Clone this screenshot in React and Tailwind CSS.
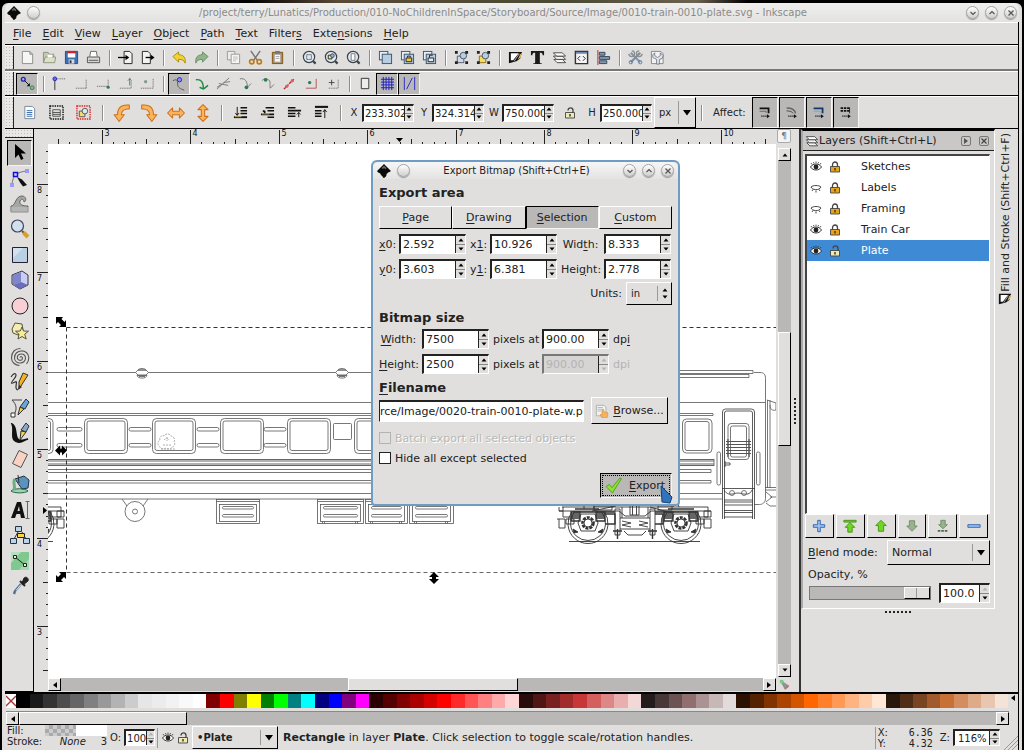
import React from "react";

const up = "border border-t-white border-l-white border-r-black border-b-black bg-[#e0dfde]";
const down = "border border-t-black border-l-black border-r-[#f4f4f4] border-b-[#f4f4f4] bg-[#b9b8b7]";

function Ic({ s = "size-4", vb = "0 0 16 16", children }) {
  return (
    <svg viewBox={vb} className={"block shrink-0 " + s} fill="none" aria-hidden="true">
      {children}
    </svg>
  );
}

/* ---------- command bar icons ---------- */
const lens = (
  <>
    <circle cx="7.5" cy="7.5" r="6" fill="#dfe8f2" stroke="#3b4248" strokeWidth="1.3" />
    <path d="M12 12l2.5 2.5" stroke="#3b4248" strokeWidth="2.4" />
  </>
);
const sheets = (
  <>
    <rect x="1.5" y="1.5" width="9" height="9" fill="#e8eef4" stroke="#39536b" />
    <rect x="4.5" y="4.5" width="10" height="10" fill="#b8cde2" stroke="#39536b" />
  </>
);
const corners = (
  <path d="M1 1h3v3H1zM12 1h3v3h-3zM1 12h3v3H1zM12 12h3v3h-3z" fill="#222" />
);
const layersIcon = (
  <>
    <path d="M2 10l3.500 3.500h9L11 10z" fill="#f6f6f6" stroke="#333" strokeWidth=".9" />
    <path d="M1.500 6.500L5 10h9.500L11 6.500z" fill="#f6f6f6" stroke="#333" strokeWidth=".9" />
    <path d="M1.500 3L5 6.500h9.500L11 3z" fill="#fff" stroke="#333" strokeWidth=".9" />
  </>
);
const fillIcon = (
  <>
    <path d="M1 2h14l-2 7-4 3-8 2z" fill="#111" />
    <path d="M3 3.500h8.500L5.500 11H3z" fill="#fff" />
    <path d="M13 4.500l2-1.500-1.500 5-3 2z" fill="#e9b85a" />
    <path d="M12 4L6.500 12" stroke="#ddd" strokeWidth=".8" />
  </>
);
const command = [
  ["New", <path d="M2.5 1.5h8l3 3v10h-11zM10.5 1.5v3h3" fill="#f6f6f4" stroke="#8b8b88" />],
  ["Open", <><path d="M1.5 13.5v-11h5l1 2h5v3" fill="#c3c8b2" stroke="#8d9380" /><path d="M1.5 13.5l2-6h11l-1 6z" fill="#dbe3c4" stroke="#8d9380" /><path d="M6 5h5v3H6z" fill="#fff" /></>],
  ["Save", <><path d="M1.5 1.5h13v13h-13z" fill="#3d6fb4" stroke="#2a4b7c" /><path d="M4 2h8v6H4z" fill="#fff" /><path d="M3 1h10v2.5H3z" fill="#d8202a" /><path d="M5 10h6v4.5H5z" fill="#d7dbe0" /><path d="M6 11h2v3H6z" fill="#333" /></>],
  ["Print", <><path d="M4 7l1-5.500h6L12 7" fill="#fff" stroke="#666" /><path d="M1.500 7.500h13v6h-13z" fill="#d8d8d6" stroke="#555" /><path d="M3 11h10" stroke="#555" /></>],
  null,
  ["Import", <><path d="M6.500 1.500h6l2.500 2.500v10.500H6.500z" fill="#f2f2f0" stroke="#222" /><path d="M0 8h9" stroke="#000" strokeWidth="1.400" /><path d="M8 5l4 3-4 3z" fill="#000" /></>],
  ["Export", <><path d="M2.500 1.500h6L11 4v10.500H2.500z" fill="#f2f2f0" stroke="#222" /><path d="M6 8h6" stroke="#000" strokeWidth="1.400" /><path d="M11.500 5l4 3-4 3z" fill="#000" /></>],
  null,
  ["Undo", <path d="M1 7l6-5v3c5 0 8 3 7 9-1-3-3-4-7-4v3z" fill="#f2d22c" stroke="#b08d0c" />],
  ["Redo", <path d="M15 7L9 2v3C4 5 1 8 2 14c1-3 3-4 7-4v3z" fill="#8fb489" stroke="#6a8f66" />],
  null,
  ["Copy", <><path d="M1.500 1.500h8v9h-8z" fill="#ededeb" stroke="#999" /><path d="M5.500 4.500h9v10h-9z" fill="#f4f4f2" stroke="#999" /><path d="M7.500 7.500h5M7.500 9.500h5M7.500 11.500h3" stroke="#bbb" /></>],
  ["Cut", <><path d="M3 1l7 10M13 1L6 11" stroke="#777" strokeWidth="1.600" /><circle cx="4" cy="12.500" r="2.300" stroke="#c07a1a" strokeWidth="1.800" /><circle cx="12" cy="12.500" r="2.300" stroke="#c07a1a" strokeWidth="1.800" /></>],
  ["Paste", <><path d="M2.500 2.500h11v12h-11z" fill="#c98a2c" stroke="#7d5114" /><path d="M4.500 4.500h7v8.500h-7z" fill="#f7f7f5" stroke="#999" /><path d="M5.500 1h5v3h-5z" fill="#777" /><path d="M6 7h4M6 9h4" stroke="#aaa" /></>],
  null,
  ["Zoom selection", <>{lens}<path d="M5 5h5v5H5z" stroke="#111" strokeDasharray="1 1" /></>],
  ["Zoom drawing", <>{lens}<path d="M4.500 5.500h4v4h-4z" fill="#f5e27a" stroke="#222" /><circle cx="9" cy="6" r="2" fill="#8fb3d6" stroke="#222" strokeWidth=".7" /></>],
  ["Zoom page", <>{lens}<path d="M5.500 4h4v7h-4z" fill="#fff" stroke="#777" /></>],
  null,
  ["Duplicate", sheets],
  ["Clone", <>{sheets}<path d="M6.500 8.500h6v4h-6z" fill="#f0c93c" stroke="#222" /><path d="M8 8V6.500h3V8" stroke="#222" /></>],
  ["Unlink clone", <>{sheets}<path d="M6.500 8.500h6v4h-6z" fill="#ecebe0" stroke="#222" /><path d="M8 8V5.500h3V6" stroke="#222" /></>],
  null,
  ["Group", <><path d="M3.500 6.500h7v7h-7z" fill="#cfdbe6" stroke="#556" /><circle cx="10" cy="6" r="3.500" fill="#b8cde2" stroke="#456" />{corners}</>],
  ["Ungroup", <><path d="M3.500 6.500h7v7h-7z" fill="#f5dc6a" stroke="#8a6d10" /><circle cx="10" cy="6" r="3.500" fill="#b8cde2" stroke="#456" />{corners}</>],
  null,
  ["Fill and Stroke", fillIcon],
  ["Text and Font", <path d="M1 1h14v4.500h-1.500c0-2-1-2.500-3-2.500v10c0 1 .500 1.200 2 1.200V15h-9v-.8c1.500 0 2-.2 2-1.200V3c-2 0-3 .5-3 2.500H1z" fill="#1a1a1a" />],
  ["Layers", layersIcon],
  ["XML Editor", <><path d="M1.500 1.500h13v13h-13z" fill="#f4f4f4" stroke="#333" strokeWidth="1.500" /><path d="M2 3h12" stroke="#6b89a8" strokeWidth="2" /><path d="M6.500 6.500L4 9l2.500 2.500M9.500 6.500L12 9l-2.500 2.500" stroke="#222" /></>],
  ["Align", <><path d="M2 0v16" stroke="#c22" /><path d="M3.500 2.500h6v3h-6zM3.500 7h11v3h-11zM3.500 11.500h8v3h-8z" fill="#7f9ab5" stroke="#345" /></>],
  null,
  ["Preferences", <><path d="M3 3l10 10" stroke="#7d99b8" strokeWidth="2.400" /><path d="M13 3L3 13" stroke="#8a8a8a" strokeWidth="2.400" /><path d="M1 4a3 3 0 103-3M15 4a3 3 0 11-3-3" stroke="#8a8f96" strokeWidth="1.400" /><circle cx="13" cy="13" r="1.800" stroke="#5c7ea6" /><circle cx="3" cy="13" r="1.800" stroke="#5c7ea6" /></>],
  ["Document Properties", <><path d="M1.500 1.500h10l2.500 2.500v10.500H1.500z" fill="#f2f2f0" stroke="#888" /><path d="M5 3v3l3 2 3-2V3l3 3-1 3-3 1v5H7v-5L3 8V5z" fill="#dfe6ee" stroke="#667" strokeWidth=".8" /></>],
];

/* ---------- snap bar icons ---------- */
const gn = "#2f7d4f";
const dots = { stroke: "#555", strokeDasharray: "1 1" };
const snap = [
  ["Snap", <><circle cx="3.500" cy="3.500" r="2" stroke="#22c" strokeWidth="1.500" /><path d="M5 5l5 5" stroke="#111" /><path d="M10.500 7.500v3.500H7z" fill="#111" /><circle cx="13" cy="12.500" r="2" fill="#8fb49b" stroke={gn} /></>, true],
  null,
  ["Snap bounding boxes", <><circle cx="3" cy="3" r="2" fill="#66f" stroke="#22c" /><path d="M3 5v10" stroke="#333" /><path d="M5 3h10" {...dots} /></>],
  ["Snap edges", <path d="M2 13h11M13 13V3" {...dots} />],
  ["Snap corners", <><path d="M1 11h12M13 11V3" {...dots} /><circle cx="13" cy="12" r="1.700" fill={gn} /></>],
  ["Snap edge midpoints", <><path d="M2 13h12M14 13V6" {...dots} /><path d="M12.500 2v8M10.500 5l2-2 2 2" stroke="#567a65" /></>],
  ["Snap box centers", <><path d="M1 13h13V3" {...dots} /><circle cx="6" cy="6" r="1.700" fill="#7d9b88" /></>],
  null,
  ["Snap nodes", <><circle cx="8" cy="4" r="2.300" fill="#8c8cf0" stroke="#22c" /><path d="M1 5c4-2 5-1 5 4 0 3 3 5 7 6" stroke="#555" /></>, true],
  ["Snap to paths", <path d="M2 4c6-1 8 3 8 10M10 14l-4-2M10 14l5-4" stroke="#1f8a44" strokeWidth="1.500" />],
  ["Snap intersections", <path d="M1 14L14 2M3 8l10 2M1 12l5-3M8 7l7-1" stroke="#777" />],
  ["Snap cusp nodes", <><path d="M2 3c6-1 8 3 8 9l4-4" stroke="#777" /><circle cx="9" cy="12" r="2" fill={gn} /></>],
  ["Snap smooth nodes", <><path d="M2 5c3-3 5-2 7-1 3 1 1 6 2 9l4-4" stroke="#777" /><circle cx="6" cy="4" r="2" fill={gn} /></>],
  ["Snap line midpoints", <><path d="M2 14L13 3" stroke="#c22" strokeWidth="1.500" strokeDasharray="3 1" /><circle cx="5" cy="11" r="1.800" fill="#c66" /><circle cx="11" cy="5" r="1.800" fill="#c66" /></>],
  ["Snap object centers", <><circle cx="6" cy="7" r="1.800" fill={gn} /><path d="M2 13h11V3" stroke="#a33" strokeWidth=".8" /></>],
  ["Snap rotation centers", <><path d="M3 7h6M6 4v6" stroke="#444" /><path d="M3 13h10V3" {...dots} /></>],
  null,
  ["Snap page border", <path d="M3.500 2.500h8v11h-8z" fill="#ececea" stroke="#333" />],
  ["Snap to grids", <path d="M1 3.500h14M1 6.500h14M1 9.500h14M1 12.500h14M3.500 1v14M6.500 1v14M9.500 1v14M12.500 1v14" stroke="#1c1cc8" />, true],
  ["Snap to guides", <path d="M2.500 1v14M13.500 1v14M11 2L5 14" stroke="#2a2ac8" />, true],
];

/* ---------- selector bar icons ---------- */
const og = { fill: "#fbb35e", stroke: "#cf6f16", strokeWidth: 0.9, strokeLinejoin: "round" };
const selA = [
  ["Select all", <><path d="M3 1.500h8l2.500 2.500v10.500H3z" fill="#fff" stroke="#789" /><path d="M5 6h6M5 8h6M5 10h6M5 12h6" stroke="#2f67b1" /></>],
  ["Select all in layers", <><path d="M1 1h14v14H1z" stroke="#111" strokeWidth="1.500" strokeDasharray="1.500 1" /><path d="M4 5h8v7H4zM4 8h8M4 10h8" fill="#ddd" stroke="#555" /></>],
  ["Deselect", <><path d="M1 1h14v14H1z" stroke="#d22" strokeWidth="1.500" strokeDasharray="1.500 1" /><path d="M3.500 6.500h6v6h-6z" fill="#f5dc6a" stroke="#555" /><circle cx="9.500" cy="6.500" r="3" fill="#dce9f5" stroke="#555" /></>],
  null,
  ["Rotate 90 CCW", <path d="M14.500 1C8 0 4 3 4 9.500H1l4.500 6 4.500-6H7.500c0-3 2-5.500 7-5z" {...og} />],
  ["Rotate 90 CW", <path d="M1.500 1C8 0 12 3 12 9.500h3l-4.500 6-4.500-6h2.500c0-3-2-5.500-7-5z" {...og} />],
  ["Flip horizontal", <path d="M0.500 8l4.500-4.500v3h6v-3l4.500 4.500-4.500 4.500v-3H5v3z" {...og} />],
  ["Flip vertical", <path d="M8 .5l4.500 4.500h-3v6h3L8 15.500 3.500 11h3V5h-3z" {...og} />],
  null,
  ["Lower to bottom", <><path d="M8 3h7M8 6h7M8 9h7" stroke="#111" strokeWidth="1.600" /><path d="M4.500 2v9M2.500 8.500l2 2.500 2-2.500" stroke="#111" /><path d="M1 13h14" stroke="#111" strokeWidth="2" /><path d="M2 12.500h7" stroke="#d8b45a" /></>],
  ["Lower", <><path d="M6 3h9M8 6h7M8 13h7" stroke="#111" strokeWidth="1.600" /><path d="M5 6v3M3 6.500h2M1 10h14" stroke="#111" strokeWidth="1.800" /><path d="M2 9.500h8" stroke="#d8b45a" /></>],
  ["Raise", <><path d="M1 3h8M1 9h8M1 12h8M1 6h14" stroke="#111" strokeWidth="1.700" /><path d="M12.500 13V8M10.500 10l2-2 2 2" stroke="#111" /></>],
  ["Raise to top", <><path d="M1 2h14" stroke="#111" strokeWidth="2.200" /><path d="M1 6h7M1 9h7M1 12h7" stroke="#111" strokeWidth="1.600" /><path d="M11.500 14V5M9.500 7.500l2-2.500 2 2.500" stroke="#111" /></>],
];
const affect = [
  ["Scale stroke width", <><path d="M2 3h11v6" stroke="#111" strokeWidth="2.200" /><path d="M2 6.500h8v2" stroke="#555" /></>],
  ["Scale rounded corners", <><path d="M2 2.500c6 0 10 1 11 6.500" stroke="#666" strokeWidth="1.800" /><path d="M2 6c4 0 7 1 8 3" stroke="#333" /></>],
  ["Move gradients", <><path d="M2 3h11v6" stroke="#123a6b" strokeWidth="2.200" /><path d="M2 6.500h8v2" stroke="#7aa0cc" /></>],
  ["Move patterns", <><path d="M2 2.500h12M2 6h12" stroke="#111" strokeWidth="2.200" strokeDasharray="3 1" /><path d="M13 2v7" stroke="#111" /></>],
];

/* ---------- toolbox icons ---------- */
const tools = [
  ["Selector", <path d="M5 1v14l3.500-3.500L11 17l2.500-1.200L11 10.500h5z" fill="#000" />, true],
  ["Node tool", <><path d="M2 16C3 8 6 4 17 3" stroke="#777" /><path d="M15 1h4v4h-4zM0 15h4v4H0z" fill="#99f" /><path d="M3.500 4.500h4v4h-4z" fill="#ccf" stroke="#11d" strokeWidth="1.500" /><path d="M7 9l5 2.500 5 5.500-4 1.500-3-4z" fill="#111" /></>],
  ["Tweak", <><path d="M1 12c5 0 4-10 11-10 4 0 5 5 2 6 0-3-3-4-4-1-1 4 3 5 8 5v6H1z" fill="#a5a6a6" stroke="#666" /><path d="M1 14h18M1 16h18M1 18h18" stroke="#c5c5c5" /></>],
  ["Zoom", <><circle cx="7.500" cy="7" r="6" fill="#cfe0f0" stroke="#445" strokeWidth="1.200" /><path d="M12 12l2 2" stroke="#555" strokeWidth="2" /><path d="M13.500 13.500l4.500 4.500" stroke="#d7a126" strokeWidth="4" /></>],
  ["Rectangle", <><path d="M2.500 2.500h15v15h-15z" fill="#b9d0e4" stroke="#223" /><path d="M3 3h10L3 13z" fill="#d3e2ef" /></>],
  ["3D box", <><path d="M2 5l10-4 6 4v10l-8 4-8-5z" fill="#c9cdf2" stroke="#334" /><path d="M11 2v10l-8 3V5z" fill="#8084cc" /><path d="M11 12l7 3-8 4-7-4z" fill="#6a6eb8" /></>],
  ["Ellipse", <circle cx="10" cy="10" r="8" fill="#f8cfd4" stroke="#222" />],
  ["Star", <><path d="M2 8l3-6 7 1 1 6-5 5-5-2z" fill="#f5eeb0" stroke="#554" /><path d="M12 6l1.500 4 5 .2-3.800 3 1.500 4.800L12 15.500 8 18l1-4.800-3.500-3 4.700-.2z" fill="#f8ee90" stroke="#554" /></>],
  ["Spiral", <path d="M10 10.500c.3-1.600 2.800-1 2.500 1-.3 2.600-5 2.600-5.200-1-.2-4.700 8-4.900 8.200.5.200 6.500-10.800 6.900-11 0C4.300 1.800 18.300 1.500 18.800 10.500c0 3-1 5-2.300 6.300M1.500 11c0 4 3.500 7.500 8 7.500M1.500 11C1.500 5 5 1.500 10.500 1.500" stroke="#555" strokeWidth="1.100" />],
  ["Pencil", <><path d="M1 5c4-6 7-3 3 2s-3 5 1 3-2 7 3 8" stroke="#333" strokeWidth="1.200" /><path d="M9 17L18 3l-5-2-4 9z" fill="#f6b21e" stroke="#333" /><path d="M8 18l1-5 3 2z" fill="#333" /></>],
  ["Bezier", <><path d="M2 2h10M2 2c5 5 5 9 2 15" stroke="#444" /><path d="M1 15h4v4H1z" fill="#fff" stroke="#333" /><path d="M16 1l3 3-4 7-5-2z" fill="#6da6d6" stroke="#234" /><path d="M8 17l2-8 4 2z" fill="#f3c84a" stroke="#333" /></>],
  ["Calligraphy", <><path d="M2 1c6 3 2 14 7 16 4 1 6-1 9-1-4 1-6 4-10 3C-1 17 5 8 2 1z" fill="#111" stroke="#111" strokeWidth="1.500" /><path d="M16 0l3 3-3 6-5-2z" fill="#8ba9c4" stroke="#234" /><path d="M10 17l1-9 5 1z" fill="#f3d15a" stroke="#333" /></>],
  ["Eraser", <path d="M9 1.500l8.500 4-6.500 13-8.500-4z" fill="#f9d2c4" stroke="#555" />],
  ["Paint bucket", <><path d="M1 17c3-3 14-3 17 0-3 2.500-14 2.500-17 0z" fill="#9fd4b0" stroke="#264" /><path d="M5 5l9-3 5 4-1 8-6 1z" fill="#5a93bd" stroke="#234" /><path d="M5 5c-3 3 1 7-1 11" stroke="#6aae82" strokeWidth="3" /><path d="M8 1l1 8" stroke="#333" /></>],
  ["Text", <><path d="M1 18L7 2h4l4 16h-4l-.8-4H6.500L5 18zM7.500 11h2.300L9 6z" fill="#111" /><path d="M15.500 1.500h4M17.500 2v16M15.500 18.500h4" stroke="#444" strokeWidth=".8" /></>],
  ["Connector", <><path d="M8 7l-4 7M12 7l4 7" stroke="#333" /><path d="M5.500 1.500h6v5h-6zM.500 13.500h6v5h-6zM13.500 13.500h6v5h-6z" fill="#bcd3ea" stroke="#234" /><path d="M7.500 8.500h7v4h-7z" fill="#f7d640" stroke="#222" /></>],
  ["Gradient", <><path d="M1 1h18v18H1z" fill="#7fc98e" /><path d="M1 1h10L1 12z" fill="#b5e0bc" /><path d="M9 19h10V8z" fill="#a5dab0" /><path d="M5 6l10 8" stroke="#222" /><path d="M3.500 4.500h3v3h-3zM13.500 12.500h3v3h-3z" fill="#dff2e2" stroke="#222" /></>],
  ["Dropper", <><path d="M12 7l2-5c2-2 5 0 4 3l-5 4z" fill="#222" stroke="#222" /><path d="M10 5l5 5" stroke="#222" strokeWidth="2" /><path d="M11 8l-6 7-1 3" stroke="#56708c" strokeWidth="2.400" /><path d="M11 8.500l-5 6" stroke="#dfe8f0" /></>],
];

const Eye = ({ closed }) => (
  <Ic s="size-3" vb="0 0 12 12">
    {closed ? (
      <path d="M1 5c1 3 8 4 10 0M3 7.500L2 9M6 8.500v2M9 7.500L10 9M1 5c2-2 8-2 10 0" stroke="#333" strokeWidth=".9" />
    ) : (
      <>
        <path d="M0.500 6c2.500-4 8.500-4 11 0-2.500 4-8.500 4-11 0z" fill="#fff" stroke="#222" strokeWidth=".9" />
        <circle cx="6" cy="6" r="2.400" fill="#222" />
        <path d="M2 3.500L1 2M4 2.500L3.500 1M6 2V.5M8 2.500L8.500 1M10 3.500L11 2" stroke="#333" strokeWidth=".8" />
      </>
    )}
  </Ic>
);
const Lock = ({ open }) => (
  <Ic s="size-3" vb="0 0 12 12">
    <path d={open ? "M4 3.500C4 0 9 0 9 3.500V6" : "M3.500 6V4c0-4 5-4 5 0v2"} stroke="#444" strokeWidth="1.300" />
    <path d="M1.500 5.500h9v5.500h-9z" fill={open ? "#eceab8" : "#e6a41e"} stroke="#444" strokeWidth=".9" />
    <path d="M6 7v2.500" stroke="#4a2b00" strokeWidth="1.400" />
  </Ic>
);
const Logo = () => (
  <Ic s="size-[14px]" vb="0 0 14 14">
    <path d="M7 0l6.500 6.500c.8 1-1 1.500-2.500 2 0 1-2 1-1.500 2S8 14 7 14s-1-1.500-2.500-2.500S4 9.500 2.500 9-.3 7.500.5 6.500z" fill="#0a0a0a" />
    <path d="M7 1.500L4.500 4l1.500 1 1-1 1.500 1.200 1-1.200z" fill="#666" />
  </Ic>
);

const Arrow = ({ d, c = "#000" }) => (
  <svg viewBox="0 0 6 6" className="block size-1.5" aria-hidden="true">
    <path d={{ up: "M.5 4.500l2.500-3 2.500 3z", down: "M.5 1.500l2.500 3 2.500-3z", left: "M5 0L1 3l4 3z", right: "M1 0l4 3-4 3z" }[d]} fill={c} />
  </svg>
);
const DropArrow = () => (
  <svg viewBox="0 0 8 6" className="h-1.5 w-2" aria-hidden="true"><path d="M0 0h8L4 5.500z" /></svg>
);

function RoundBtn({ kind, label }) {
  return (
    <button aria-label={label} className="grid size-[13px] place-items-center rounded-full border border-[#a5a5a4] bg-linear-to-b from-white to-[#cfcfce] shadow-[0_1px_1px_#999]">
      <svg viewBox="0 0 8 8" className="block size-2" fill="none" stroke="#555" strokeWidth="1.200">
        {kind === "down" && <path d="M1.500 3L4 5.500 6.500 3" />}
        {kind === "up" && <path d="M1.500 5L4 2.500 6.500 5" />}
        {kind === "x" && <path d="M1.500 1.500l5 5M6.500 1.500l-5 5" />}
      </svg>
    </button>
  );
}

function ToolBtn({ label, pressed, size, children }) {
  return (
    <button
      aria-label={label}
      className={"flex shrink-0 items-center justify-center " + size + " " + (pressed ? down : "border border-transparent")}
    >
      {children}
    </button>
  );
}
const Sep = ({ w = "w-[10px]" }) => (
  <span className={"flex h-4 shrink-0 justify-center " + w}>
    <span className="w-px bg-[#8f8e8d] shadow-[1px_0_0_#fff]" />
  </span>
);
const Handle = () => (
  <span className="mr-[2px] w-[9px] shrink-0 self-stretch border-r border-r-[#222] bg-[#e9e8e7] bg-[radial-gradient(#bdbcbb_30%,transparent_35%)] bg-[size:3px_3px]" />
);

function Spin({ value, label, id, disabled, upOff, className = "w-full h-5", text = "text-[11px] pl-[2px]", size = "w-[10px]" }) {
  const ink = disabled ? "text-[#b4b3b2]" : "text-[#222]";
  const frame = disabled ? "border-t-[#777] border-l-[#777]" : "border-t-[#222] border-l-[#222]";
  return (
    <span className={"flex border-t-2 border-l-2 border-r border-b border-r-white border-b-white " + frame + " " + className}>
      <input
        id={id}
        aria-label={label}
        defaultValue={value}
        disabled={disabled}
        className={"min-w-0 flex-1 leading-none outline-none " + text + " " + ink + (disabled ? " bg-[#d6d5d4]" : " bg-white")}
      />
      <span className={"flex shrink-0 flex-col border-l border-l-[#222] " + size}>
        <button aria-label={"Increase " + label} disabled={disabled} className="grid flex-1 place-items-center border-b border-b-[#888] bg-[#e0dfde]">
          <Arrow d="up" c={disabled || upOff ? "#b4b3b2" : "#000"} />
        </button>
        <button aria-label={"Decrease " + label} disabled={disabled} className="grid flex-1 place-items-center bg-[#e0dfde]">
          <Arrow d="down" c={disabled ? "#b4b3b2" : "#000"} />
        </button>
      </span>
    </span>
  );
}

function U({ t }) {
  const [a, b, c] = t.split("_");
  return (
    <span>
      {a}
      <span className="underline underline-offset-2">{b}</span>
      {c}
    </span>
  );
}

const menus = ["_F_ile", "_E_dit", "_V_iew", "_L_ayer", "_O_bject", "_P_ath", "_T_ext", "Filter_s_", "Exte_n_sions", "_H_elp"];

const palette = (
  "000000 1a1a1a 333333 4d4d4d 666666 808080 999999 b3b3b3 cccccc e6e6e6 ececec f2f2f2 f9f9f9 ffffff " +
  "800000 ff0000 808000 ffff00 008000 00ff00 008080 00ffff 000080 0000ff 800080 ff00ff " +
  "2b0000 550000 800000 aa0000 d40000 ff0000 ff2a2a ff5555 ff8080 ffaaaa ffd5d5 " +
  "280b0b 501616 782121 a02c2c c83737 d35f5f de8787 e9afaf f4d7d7 " +
  "241c1c 483737 6c5353 916f6f ac9393 c8b7b7 e3dbdb " +
  "2b1100 552200 803300 aa4400 d45500 ff6600 ff7f2a ff9955 ffb380 ffccaa ffe6d5 " +
  "28170b 502d16 784421 a05a2c c87137 d38d5f deaa87 e9c6af f4e3d7"
).split(" ");

/* ---------- rulers ---------- */
function HRuler() {
  const t = [];
  for (let i = -4; i <= 60; i++) {
    const x = Math.round(102 + i * 11.05) + 0.5;
    const major = i % 8 === 0;
    t.push(<path key={i} d={`M${x} 15v${major ? -14 : i % 4 === 0 ? -5 : -2}`} stroke="#222" />);
    if (major) t.push(<text key={"t" + i} x={x + 2} y="7" fontSize="8" fill="#111">{3 + i / 8}</text>);
  }
  return (
    <svg viewBox="48 0 728 15" width="728" height="15" className="block" aria-hidden="true">
      {t}
      <path d="M396 9h7l-3.500 4z" fill="#000" />
    </svg>
  );
}
function VRuler() {
  const t = [];
  for (let i = -3; i <= 44; i++) {
    const y = Math.round(184 + i * 11.05) + 0.5;
    const major = i % 8 === 0;
    t.push(<path key={i} d={`M14 ${y}h${major ? -11 : i % 4 === 0 ? -5 : -2}`} stroke="#222" />);
    if (major) t.push(<text key={"t" + i} x="3" y={y + 8} fontSize="8" fill="#111">{8 - i / 8}</text>);
  }
  return (
    <svg viewBox="0 144 14 534" width="14" height="534" className="block shrink-0" aria-hidden="true">
      {t}
      <path d="M9 507v7l4-3.500z" fill="#000" />
    </svg>
  );
}

/* ---------- train drawing ---------- */
function Bogie({ x }) {
  const wheel = (cx) => (
    <g key={cx}>
      <path d={`M${cx - 16} 511.500a20 20 0 1032 0`} />
      <path d={`M${cx - 14} 512.500a17.500 17.500 0 1028 0`} />
      <circle cx={cx} cy="523" r="5.500" strokeWidth="2.600" strokeDasharray="3 1" />
      <circle cx={cx} cy="523" r="4" />
      <path d={`M${cx - 7} 514h14l3 9-3 8h-14l-3-8z`} />
      <path d={`M${cx - 17} 512h9v9h-9zM${cx - 17} 514h9M${cx - 17} 516h9M${cx - 17} 518h9M${cx + 8} 512h9v9h-9zM${cx + 8} 514h9M${cx + 8} 516h9M${cx + 8} 518h9`} strokeWidth="1.300" />
      <path d={`M${cx - 15} 529l5 3-4 1zM${cx + 15} 529l-5 3 4 1z`} fill="#333" />
    </g>
  );
  return (
    <g transform={`translate(${x} 0)`} stroke="#333" strokeWidth=".9">
      {wheel(588)}
      {wheel(681)}
      <path d="M562 507h146M559 511h60l6 5h20l6-5h60M557 519h8v9h-6v-9M704 511h7v6h-7zM704 519h7v9h-7zM563 507v10h10M708 507v10h-10M559 507v4h4M566 519h8v5h-8zM696 519h8v5h-8z" />
      <path d="M569 541.500h131" />
      <path d="M615 509v26h5v-26zM650 509v26h5v-26zM620 518h30M620 529h30M624 531l4 4h14l4-4M622 507v11M648 507v11M630 506v9h9v-9M632.500 506v9M636.500 506v9" />
      <path d="M622 521l9 2-9 2 9 2M639 521l9 2-9 2 9 2M584 509v-5h10v5M592 511l24-5M650 507l22 6M673 507a3 3 0 016 0M594 506h18v4h-18zM658 506h14v4h-14z" />
      <path d="M613 531h9M648 531h9M617.500 529v10M652.500 529v10M573 512h42M655 512h42M575 509h24M668 509h26M605 514h10v10h-10M655 514h8v10h-8" strokeWidth="1.400" />
    </g>
  );
}
function Train() {
  const win = [10, 84.5, 152.5, 220.5, 287.5, 354.5];
  const slots = [[57, 25], [129, 22], [197, 22], [264, 22]];
  const boxes = [[216.5, 43], [317.5, 46], [365.5, 42], [409.5, 44]];
  return (
    <svg viewBox="48 144 728 534" width="728" height="534" className="block" fill="none" stroke="#555" strokeWidth=".8" role="img" aria-label="Train car outline drawing">
      <path d="M48 372.500H680M48 402.500H765M48 413.500H713M48 415.500H713M48 493.500H722M48 499H722" />
      <path d="M48 459.500H714M48 461H714M48 464H714M48 465.500H714" strokeWidth="1.200" stroke="#666" />
      <path d="M48 469.500H711M48 472.500H711M48 480.500H711M48 483H711M714 459v7M711 469.500v3M711 480.500v2.500M713 413.500v2" />
      {win.map((x) => (
        <g key={x}>
          <rect x={x} y="418.500" width="43" height="35" rx="4" />
          <rect x={x + 2.5} y="421" width="38" height="29.500" rx="2" />
        </g>
      ))}
      {slots.map(([x, w]) => (
        <g key={x}>
          <rect x={x} y="427.500" width={w} height="3.500" rx="1.700" />
          <rect x={x} y="443.500" width={w} height="3.500" rx="1.700" />
        </g>
      ))}
      <rect x="333.500" y="423.500" width="18" height="16" rx="1" />
      {[142, 342].map((x) => (
        <g key={x} fill="#fff">
          <path d={`M${x - 4} 370c1-2 7-2 8 0zM${x - 6.5} 372.500l2.500-2.500h8l2.500 2.500-2.500 2.500h-8zM${x - 5} 375.500h10c-1 3.500-9 3.500-10 0zM${x - 3} 376.500h6`} />
        </g>
      ))}
      <path d="M160 440a3 3 0 014-4 4 4 0 017 0 4 4 0 013 6 3 3 0 01-2 5 4 4 0 01-6 1 4 4 0 01-6-1 4 4 0 010-7zM164 440a3 3 0 015 0M163 445h8M167 437v4M161 449h14" stroke="#999" strokeDasharray="2 1" />
      <path d="M122 499l5 7M148 499l-5 7" />
      <circle cx="135" cy="511.500" r="10" />
      <circle cx="135" cy="511.500" r="2.500" />
      {boxes.map(([x, w], i) => (
        <g key={x}>
          <rect x={x} y="499.500" width={w} height="24" />
          <path d={`M${x} 501.500h${w}`} />
          {i > 0 && <path d={`M${x + 5} 521.500v2M${x + 7} 521.500v2M${x + w - 8} 521.500v2M${x + w - 6} 521.500v2`} />}
          <rect x={x + 3} y="504.500" width={w - 6} height="17" />
          <rect x={x + 6} y="506.500" width={w - 12} height="2.500" rx="1.200" />
          <rect x={x + 6} y="514.500" width={w - 12} height="2.500" rx="1.200" />
        </g>
      ))}
      <Bogie x={0} />
      <Bogie x={-647} />
      {/* carriage end */}
      <path d="M680 370.500h73v3h-73M680 374.500h69v3h-69M754 372.500h6c4 0 5.500 2 5.500 6v120c0 4-3 6-6 6h-5" />
      <rect x="682.500" y="419" width="29.500" height="34" rx="4" />
      <rect x="685" y="421.500" width="24" height="29" rx="2" />
      <path d="M722.500 519V412q0-3 3-3h26q3 0 3 3v107M724.500 519V413q0-2 2-2h24q2 0 2 2v106" stroke="#333" />
      <rect x="728" y="423.500" width="21" height="36" rx="3" />
      <rect x="730.500" y="426" width="16" height="31" rx="2" />
      <path d="M726 441.500h25M726 444.500h25M726 447.500h25M726 450.500h25M726 453.500h25M728 439v18M749 439v18" strokeWidth="1.200" />
      <rect x="717" y="452" width="3.500" height="33" rx="1.500" />
      <rect x="756.500" y="452" width="3.500" height="33" rx="1.500" />
      <path d="M725 461v6M725 463h5v2h-5M722 488.500h33M724 490c3 5 6 4 8 4s3-1 6-1 4 1 6 1 6 1 8-4M724 500h29M724 502h29M724 505h29M724 510.500h29M724 512.500h29M724 517h29" stroke="#333" />
      <circle cx="732" cy="493" r="2.500" />
      <circle cx="744" cy="493" r="2.500" />
      <path d="M767.500 400v88M770 400v88M767 400l9 3v7c-4 1-6-1-6-5M765 487.500h11M765 490h11M766 492l6 5-6 5M770 497h6M766 503l4 3h6" />
      <path d="M66.500 327.500H776M66.500 327.500V572.500" stroke="#333" strokeWidth="1" strokeDasharray="4 3" />
      <path d="M66.500 572.500H776" stroke="#666" strokeWidth="1" strokeDasharray="4 3" />
      <g fill="#000" stroke="none">
        <path d="M56 317h7l-1.500 2 3 3 1.500-2v7h-7l2-2-3-3-2 2z" />
        <path d="M56 582v-7l2 2 3-3-2-2h7v7l-2-2-3 3 2 2z" />
        <path d="M55 450.500l5-5v3h2v-3l5 5-5 5v-3h-2v3z" />
        <path d="M434 572l5 5h-3v2h3l-5 5-5-5h3v-2h-3z" />
      </g>
    </svg>
  );
}

function ExportDialog() {
  const tabs = ["_P_age", "_D_rawing", "_S_election", "_C_ustom"];
  return (
    <section aria-label="Export Bitmap" className="absolute top-[160px] left-[371px] w-[309px] rounded-t-md rounded-b-sm border-2 border-[#6f9cc4] bg-[#e0dfde] pb-[6px] text-[11px]">
      <header className="flex h-[17px] items-center gap-[6px] rounded-t-md bg-linear-to-b from-[#f6f6f6] to-[#e4e3e2] px-[4px]">
        <Logo />
        <RoundBtn label="Dialog menu" />
        <h2 className="flex-1 text-center text-[10px]">Export Bitmap (Shift+Ctrl+E)</h2>
        <RoundBtn kind="down" label="Minimize dialog" />
        <RoundBtn kind="up" label="Maximize dialog" />
        <RoundBtn kind="x" label="Close dialog" />
      </header>
      <form className="flex flex-col px-[6px]" onSubmit={(e) => e.preventDefault()}>
        <h3 className="mt-1 text-[13px] leading-5 font-bold">Export area</h3>
        <div className="mt-[3px] grid h-[23px] grid-cols-4">
          {tabs.map((t, i) => (
            <button key={t} type="button" className={i === 2 ? down : up}>
              <U t={t} />
            </button>
          ))}
        </div>
        <div className="mt-[5px] grid grid-cols-[16px_67px_16px_67px_39px_67px] items-center gap-x-1 gap-y-[5px] whitespace-nowrap">
          <label htmlFor="x0"><U t="_x_0:" /></label>
          <Spin id="x0" label="x0" value="2.592" />
          <label htmlFor="x1"><U t="x_1_:" /></label>
          <Spin id="x1" label="x1" value="10.926" />
          <label htmlFor="aw" className="text-center"><U t="Wid_t_h:" /></label>
          <Spin id="aw" label="area width" value="8.333" />
          <label htmlFor="y0"><U t="_y_0:" /></label>
          <Spin id="y0" label="y0" value="3.603" />
          <label htmlFor="y1"><U t="y_1_:" /></label>
          <Spin id="y1" label="y1" value="6.381" />
          <label htmlFor="ah"><U t="Hei_g_ht:" /></label>
          <Spin id="ah" label="area height" value="2.778" />
        </div>
        <div className="mt-[3px] flex items-center justify-end gap-1">
          <label htmlFor="units">Units:</label>
          <span className="relative">
            <select id="units" className={"h-[23px] w-[46px] appearance-none pl-1 text-[10px] " + up} defaultValue="in">
              <option>in</option>
            </select>
            <span className="pointer-events-none absolute inset-y-1 right-1 flex flex-col justify-center gap-px border-l border-l-[#999] pl-1">
              <Arrow d="up" />
              <Arrow d="down" />
            </span>
          </span>
        </div>
        <h3 className="mt-[3px] text-[13px] leading-5 font-bold">Bitmap size</h3>
        <div className="mt-px grid grid-cols-[39px_67px_45px_67px_auto] items-center justify-start gap-x-1 gap-y-[5px] whitespace-nowrap">
          <label htmlFor="bw" className="text-center"><U t="_W_idth:" /></label>
          <Spin id="bw" label="bitmap width" value="7500" />
          <span>pixels at</span>
          <Spin id="d1" label="horizontal dpi" value="900.00" />
          <label htmlFor="d1"><U t="dp_i_" /></label>
          <label htmlFor="bh"><U t="_H_eight:" /></label>
          <Spin id="bh" label="bitmap height" value="2500" />
          <span>pixels at</span>
          <Spin id="d2" label="vertical dpi" value="900.00" disabled />
          <label htmlFor="d2" className="text-[#b4b3b2]">dpi</label>
        </div>
        <h3 className="mt-[5px] text-[13px] leading-[18px] font-bold">
          <label htmlFor="fn"><U t="_F_ilename" /></label>
        </h3>
        <div className="flex items-center gap-[7px]">
          <input id="fn" defaultValue="rce/Image/0020-train-0010-plate-w.pr" className="h-[22px] w-[205px] border-t-2 border-l border-t-[#222] border-l-[#222] border-r border-b border-r-white border-b-white bg-white outline-none" />
          <button type="button" className={"flex h-[27px] w-[77px] items-center justify-center gap-1 " + up}>
            <Ic s="size-[14px]">
              <path d="M1.500 1.500h9l2 2v10h-11z" fill="#f2f2f0" stroke="#aaa" />
              <path d="M3 4h6M3 6h6M3 8h4" stroke="#9bb6d2" />
              <path d="M8 7l1.500-1 1 3 4 1v4l-1 2H8l-2-4 2 0z" fill="#f4b160" stroke="#d88a35" strokeWidth=".7" />
            </Ic>
            <U t="_B_rowse..." />
          </button>
        </div>
        <label className="mt-[4px] flex h-5 items-center gap-1 text-[#b9b8b7] [text-shadow:1px_1px_0_#fff]">
          <input type="checkbox" disabled className="size-3 appearance-none border border-[#b4b3b2]" />
          Batch export all selected objects
        </label>
        <label className="flex h-5 items-center gap-1">
          <input type="checkbox" className="size-3 appearance-none border border-[#222] bg-white" />
          Hide all except selected
        </label>
        <div className="mt-[5px] flex justify-end">
          <button className={"h-[25px] w-[72px] p-px " + down}>
            <span className="flex h-full items-center gap-[7px] border border-dotted border-black pl-[2px]">
              <Ic s="size-[17px]">
                <path d="M1 9l3-2 2.500 3L14 1l1.500.500L7 15z" fill="#8ae234" stroke="#4e9a06" strokeWidth=".8" />
              </Ic>
              <U t="_E_xport" />
            </span>
          </button>
        </div>
      </form>
      <svg viewBox="0 0 14 20" className="absolute right-1 -bottom-px h-5 w-3.5" aria-hidden="true">
        <path d="M1 1l11 11-2 6-8-1z" fill="#2f74bd" stroke="#1a4173" />
      </svg>
    </section>
  );
}

const layers = [
  ["Sketches", false, false],
  ["Labels", true, false],
  ["Framing", true, false],
  ["Train Car", false, false],
  ["Plate", false, true],
];

const G = { fill: "#6fd624", stroke: "#3f8f0c" };
const D = { fill: "#98b48c", stroke: "#6d8a62" };
const layerBtns = [
  ["Add layer", <path d="M6.500 1.500h3v5h5v3h-5v5h-3v-5h-5v-3h5z" fill="#9cc2ee" stroke="#2a5db0" />],
  ["Raise layer to top", <><path d="M1 1.500h14v2H1z" {...G} /><path d="M8 4l5.500 5.500h-3v5.500h-5V9.500h-3z" {...G} /></>],
  ["Raise layer", <path d="M8 1.500l6 6h-3v6.500H5V7.500H2z" {...G} />],
  ["Lower layer", <path d="M8 14l6-6h-3V2H5v6H2z" {...D} />],
  ["Lower layer to bottom", <><path d="M8 11l5-4.500h-2.500v-5h-5v5H3z" {...D} /><path d="M2 13.500h12" stroke="#4d6a45" strokeWidth="2" strokeDasharray="3 1" /></>],
  ["Delete layer", <path d="M1 6.500h14v3H1z" fill="#9cc2ee" stroke="#2a5db0" />],
];

function Dock() {
  return (
    <aside className="flex w-[219px] shrink-0 border-l-2 border-l-[#333]">
      <div className="flex w-[194px] flex-col">
        <div className="flex flex-col border-t-2 border-t-black border-r border-b border-r-white border-b-white border-l-2 border-l-[#aaa] pb-[5px]">
          <header className="flex h-[20px] items-center border-b border-b-[#222] bg-[#c9c8c7] pr-[5px] pl-[2px]">
            <Ic s="size-[14px]">{layersIcon}</Ic>
            <h2 className="flex-1 whitespace-nowrap">Layers (Shift+Ctrl+L)</h2>
            <button aria-label="Iconify" className="mr-[8px] grid size-[10px] place-items-center rounded-xs border border-[#777]"><Arrow d="right" c="#555" /></button>
            <button aria-label="Close panel" className="grid size-[10px] place-items-center rounded-xs border border-[#777]">
              <svg viewBox="0 0 6 6" className="size-1.5" stroke="#444" strokeWidth="1.200"><path d="M.5.5l5 5M5.500.5l-5 5" /></svg>
            </button>
          </header>
          <ul className="mr-[4px] ml-[2px] mt-[3px] h-[360px] border-t-2 border-l-2 border-t-[#444] border-l-[#444] border-r border-b border-r-white border-b-white bg-white">
            {layers.map(([n, closed, open], i) => (
              <li key={n} className={"flex h-[21px] items-center pl-[3px] " + (i === 4 ? "bg-[#3f8ad4] text-white" : "")}>
                <button aria-label={"Visibility of " + n}><Eye closed={closed} /></button>
                <button aria-label={"Lock " + n} className="ml-[7px]"><Lock open={open} /></button>
                <span className="ml-[20px]">{n}</span>
              </li>
            ))}
          </ul>
          <div className="mr-[6px] ml-[2px] grid grid-cols-6 gap-[2px]">
            {layerBtns.map(([l, ic]) => (
              <button key={l} aria-label={l} className={"flex h-6 items-center justify-center " + up}>
                <Ic s="size-[14px]">{ic}</Ic>
              </button>
            ))}
          </div>
          <div className="mt-[2px] mr-[4px] ml-[5px] flex items-center justify-between">
            <label htmlFor="blend" className="whitespace-nowrap"><U t="_B_lend mode:" /></label>
            <span className="relative">
              <select id="blend" className={"h-[25px] w-[103px] appearance-none pl-1 " + up} defaultValue="Normal"><option>Normal</option></select>
              <span className="pointer-events-none absolute inset-y-1 right-[5px] flex items-center border-l border-l-[#999] pl-1">
                <DropArrow />
              </span>
            </span>
          </div>
          <label htmlFor="opacity" className="mt-[2px] ml-[5px] leading-4">Opacity, %</label>
          <div className="mr-[4px] ml-[6px] flex items-center justify-between">
            <input
              id="opacity"
              type="range"
              defaultValue="100"
              className="h-[14px] w-[122px] appearance-none border border-[#777] bg-[#b9b8b7] [&::-webkit-slider-thumb]:h-[12px] [&::-webkit-slider-thumb]:w-[26px] [&::-webkit-slider-thumb]:appearance-none [&::-webkit-slider-thumb]:border [&::-webkit-slider-thumb]:border-t-white [&::-webkit-slider-thumb]:border-l-white [&::-webkit-slider-thumb]:border-r-black [&::-webkit-slider-thumb]:border-b-black [&::-webkit-slider-thumb]:bg-[linear-gradient(90deg,#e0dfde_45%,#999_45%,#999_50%,#e0dfde_50%)]"
            />
            <Spin label="Opacity value" value="100.0" className="h-5 w-[51px]" upOff />
          </div>
        </div>
        <div className="mt-[2px] h-[2px] w-[28px] self-center bg-[radial-gradient(#222_50%,transparent_55%)] bg-[size:4px_2px]" />
      </div>
      <button className="flex w-[20px] flex-col items-center self-start pt-[4px]">
        <span className="rotate-180 whitespace-nowrap [writing-mode:vertical-rl]">Fill and Stroke (Shift+Ctrl+F)</span>
        <Ic s="size-[14px]">{fillIcon}</Ic>
      </button>
    </aside>
  );
}

function ScrollBtn({ d }) {
  return (
    <button aria-label={"Scroll " + d} className={"grid size-[13px] shrink-0 place-items-center " + up}>
      <Arrow d={d} />
    </button>
  );
}

const coords = [["X", "233.302"], ["Y", "324.314"], ["W", "750.000"], null, ["H", "250.000"]];

export default function App() {
  return (
    <div className="relative flex min-h-screen flex-col bg-black bg-[linear-gradient(90deg,#000_24%,#5a4a36_33%,#4a4a34_55%,#6b6250_68%,#000_73%)] bg-[size:100%_3px] bg-no-repeat px-[2px] pt-[3px] font-['DejaVu_Sans',sans-serif] text-[11px] leading-none text-[#222]">
      <div className="flex flex-1 flex-col rounded-t-md bg-[#e0dfde] px-[3px]">
        <header className="flex h-[19px] items-center gap-[6px] rounded-t-md bg-linear-to-b from-[#efefee] to-[#e3e2e1] px-[2px]">
          <Logo />
          <RoundBtn label="Window menu" />
          <h1 className="flex-1 truncate text-center text-[10px] leading-4 text-[#8a8a89]">
            /project/terry/Lunatics/Production/010-NoChildrenInSpace/Storyboard/Source/Image/0010-train-0010-plate.svg - Inkscape
          </h1>
          <RoundBtn kind="down" label="Minimize" />
          <RoundBtn kind="up" label="Maximize" />
          <RoundBtn kind="x" label="Close" />
        </header>

        <div className="flex flex-1 flex-col border-r border-r-black">
          <nav className="flex h-[23px] items-center gap-[11px] border-t border-b border-t-white border-b-black pl-[8px]">
            {menus.map((m) => (
              <button key={m}><U t={m} /></button>
            ))}
          </nav>

          <div role="toolbar" aria-label="Commands" className="flex h-[26px] items-center border-t border-b-2 border-t-white border-b-[#777]">
            <Handle />
            {command.map((c, i) => (c ? <ToolBtn key={i} label={c[0]} size="size-[22px]"><Ic s="size-[15px]">{c[1]}</Ic></ToolBtn> : <Sep key={i} />))}
          </div>

          <div role="toolbar" aria-label="Snap controls" className="flex h-[25px] items-center border-t border-b border-t-white border-b-black">
            <Handle />
            {snap.map((c, i) => (c ? <ToolBtn key={i} label={c[0]} pressed={c[2]} size="size-[22px]"><Ic s="size-[15px]">{c[1]}</Ic></ToolBtn> : <Sep key={i} />))}
          </div>

          <div role="toolbar" aria-label="Selector controls" className="flex h-[33px] items-center border-t border-b border-t-white border-b-black">
            <Handle />
            {selA.map((c, i) => (c ? <ToolBtn key={i} label={c[0]} size="size-[27px]"><Ic s={i > 3 && i < 8 ? "size-[18px]" : "size-[15px]"}>{c[1]}</Ic></ToolBtn> : <Sep key={i} w="w-[11px]" />))}
            <Sep w="w-[11px]" />
            {coords.map((c, i) =>
              c ? (
                <label key={i} className="flex items-center text-[10px]">
                  <span className="w-[16px] shrink-0 text-center">{c[0]}</span>
                  <Spin label={c[0]} value={c[1]} text="text-[10px] pl-px" size="w-[9px]" className="mr-[2px] h-[18px] w-[52px]" />
                </label>
              ) : (
                <button key={i} aria-label="Lock ratio" className="mx-[8px]"><Lock open /></button>
              )
            )}
            <span className="relative self-stretch">
              <select aria-label="Unit" className={"h-full w-[42px] appearance-none pl-1 text-[10px] " + up} defaultValue="px"><option>px</option></select>
              <span className="pointer-events-none absolute inset-y-1 right-[5px] flex items-center border-l border-l-[#999] pl-1">
                <DropArrow />
              </span>
            </span>
            <Sep w="w-[11px]" />
            <span className="mr-[6px] ml-[6px] text-[10px]">Affect:</span>
            <span className="flex gap-px self-stretch">
              {affect.map(([l, ic]) => (
                <button key={l} aria-label={l} aria-pressed="true" className={"flex w-[26px] items-center justify-center " + down}>
                  <Ic s="size-[13px]">
                    {ic}
                    <path d="M4 12.500h7" stroke="#111" strokeWidth="1.500" strokeDasharray="1.500 1" />
                    <path d="M11 10l3.500 2.500L11 15z" fill="#111" />
                  </Ic>
                </button>
              ))}
            </span>
          </div>

          <main className="flex flex-1">
            <div role="toolbar" aria-label="Tools" className="flex w-[29px] shrink-0 flex-col border-r border-b border-r-black border-b-black">
              <div className="mb-[2px] h-[9px] border-b border-b-[#222] bg-[#e9e8e7] bg-[radial-gradient(#bdbcbb_30%,transparent_35%)] bg-[size:3px_3px]" />
              <div className="flex h-[459px] flex-col pr-px pl-[2px]">
                {tools.map(([l, ic, p]) => (
                  <ToolBtn key={l} label={l} pressed={p} size="w-full flex-1">
                    <Ic s="size-5" vb="0 0 20 20">{ic}</Ic>
                  </ToolBtn>
                ))}
              </div>
            </div>

            <div className="flex min-w-0 flex-1 flex-col">
              <div className="flex pr-[8px]">
                <div className="ml-[14px] min-w-0 flex-1 overflow-hidden"><HRuler /></div>
                <button aria-label="Display mode" className="ml-px grid size-[14px] place-items-center rounded-xs border border-[#aaa] bg-[#f4f4f3] text-[9px] text-[#777]">¶</button>
              </div>
              <div className="flex flex-1">
                <VRuler />
                <div className="min-w-0 flex-1 overflow-hidden bg-white"><Train /></div>
                <div className="mt-1 mb-px ml-[2px] flex w-[13px] flex-col bg-[#b9b8b7]">
                  <ScrollBtn d="up" />
                  <div className="flex-[172]" />
                  <div className={"flex-[112] " + up} />
                  <div className="flex-[219]" />
                  <ScrollBtn d="down" />
                </div>
                <div className="flex w-[8px] items-center justify-center">
                  <span className="h-[28px] w-[2px] bg-[radial-gradient(#222_50%,transparent_55%)] bg-[size:2px_4px]" />
                </div>
              </div>
              <div className="mb-px flex pr-[8px]">
                <div className="ml-[14px] flex flex-1 bg-[#b9b8b7]">
                  <ScrollBtn d="left" />
                  <div className="flex-[288]" />
                  <div className={"flex-[168] " + up} />
                  <div className="flex-[246]" />
                  <ScrollBtn d="right" />
                </div>
                <button aria-label="Color management" className="ml-[2px] grid w-[13px] place-items-center">
                  <Ic s="size-[11px]"><path d="M2 2l12 8-5 5z" fill="#8a9a94" stroke="#777" /><circle cx="4" cy="4" r="3" fill="#7fc98e" /><path d="M9 14l5-4" stroke="#c66" strokeWidth="2" /></Ic>
                </button>
              </div>
            </div>

            <Dock />
          </main>

          <div className="flex h-[19px] border-t-2 border-t-black pl-px">
            <div className="flex h-[14px] flex-1">
              <button aria-label="No color" className="w-[10px] bg-white">
                <svg viewBox="0 0 10 14" className="block h-3.5 w-2.5" stroke="#a33" strokeWidth="1.300"><path d="M0 2l10 10M10 2L0 12" /></svg>
              </button>
              {palette.map((c, i) => (
                <button key={i} aria-label={"#" + c} className="flex-1" style={{ backgroundColor: "#" + c }} />
              ))}
            </div>
            <button aria-label="Palette menu" className="flex w-[10px] items-start justify-center pt-px"><Arrow d="left" /></button>
          </div>

          <div className="mr-[9px] ml-px flex h-[14px] border-t border-t-[#888] bg-[#b9b8b7]">
            <ScrollBtn d="left" />
            <div className={"flex-[167] " + up} />
            <div className="flex-[812]" />
            <ScrollBtn d="right" />
          </div>

          <footer className="flex h-[25px] items-center">
            <div className="grid w-[102px] grid-cols-[38px_1fr_auto] self-start pl-[2px] text-[10px] leading-[11px]">
              <span>Fill:</span>
              <span className="col-span-2 flex h-[11px]">
                <span className="flex-1 bg-[#ccc] bg-[conic-gradient(#aaa_25%,#ccc_0_50%,#aaa_0_75%,#ccc_0)] bg-[size:8px_8px]" />
                <span className="flex-1 bg-white" />
              </span>
              <span>Stroke:</span>
              <span className="text-center italic">None</span>
              <span>3</span>
            </div>
            <label htmlFor="o" className="mx-[3px] text-[10px]">O:</label>
            <Spin id="o" label="Master opacity" value="100" text="text-[10px] pl-px" className="h-[17px] w-[31px]" size="w-[8px]" upOff />
            <span className="mx-[2px] h-5 w-px bg-[#999]" />
            <button aria-label="Layer visibility" className="ml-[2px]"><Eye /></button>
            <button aria-label="Layer lock" className="mx-[3px]"><Lock open /></button>
            <span className="relative">
              <select aria-label="Current layer" className={"h-[23px] w-[86px] appearance-none pl-1 text-[10px] font-bold " + up} defaultValue="p"><option value="p">•Plate</option></select>
              <span className="pointer-events-none absolute inset-y-1 right-[5px] flex items-center border-l border-l-[#999] pl-1">
                <DropArrow />
              </span>
            </span>
            <p className="ml-[5px] flex-1 truncate leading-4">
              <b>Rectangle</b> in layer <b>Plate</b>. Click selection to toggle scale/rotation handles.
            </p>
            <dl className="grid w-[58px] grid-cols-[auto_1fr] border-l border-l-[#999] pl-[2px] leading-[11px]">
              <dt className="text-[10px]">X:</dt>
              <dd className="text-right font-['DejaVu_Sans_Mono',monospace] text-[10px]">6.36</dd>
              <dt className="text-[10px]">Y:</dt>
              <dd className="text-right font-['DejaVu_Sans_Mono',monospace] text-[10px]">4.32</dd>
            </dl>
            <label htmlFor="z" className="mr-[3px] ml-[7px] text-[10px]">Z:</label>
            <Spin id="z" label="Zoom" value="116%" text="text-[10px] pl-[3px]" className="mr-[2px] h-[17px] w-[47px]" />
            <svg viewBox="0 0 16 16" className="size-4 self-end" stroke="#999"><path d="M2 16L16 2M6 16L16 6M10 16l6-6" /></svg>
          </footer>
        </div>
      </div>
      <ExportDialog />
    </div>
  );
}
